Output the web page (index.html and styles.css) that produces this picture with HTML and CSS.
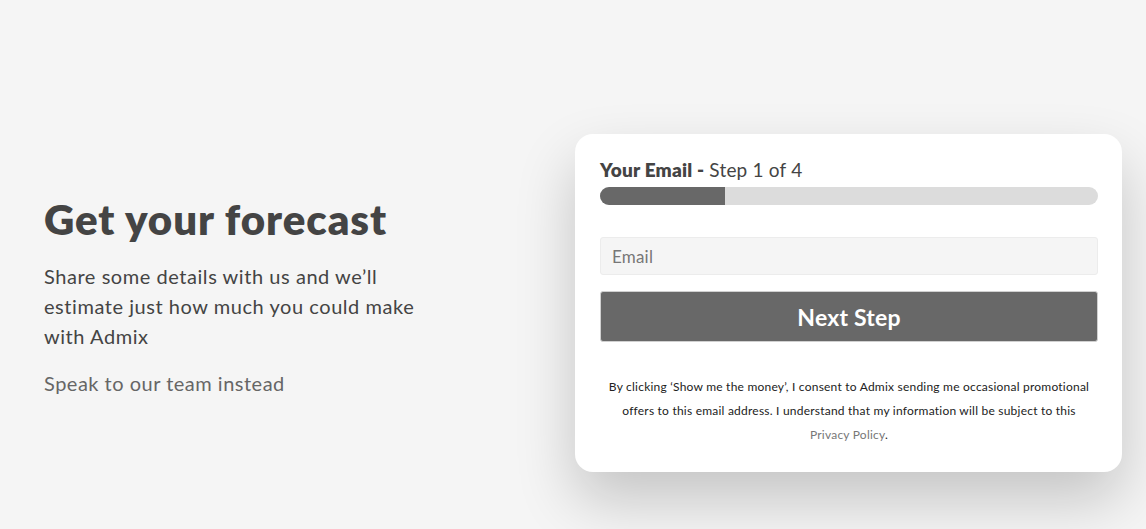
FILE: index.html
```html
<!DOCTYPE html>
<html lang="en">
<head>
<meta charset="utf-8">
<title>Get your forecast</title>
<link rel="stylesheet" href="styles.css">
</head>
<body>
<main class="page">
  <section class="intro">
    <h1 class="intro-title">Get your forecast</h1>
    <p class="intro-text">Share some details with us and we’ll estimate just how much you could make with Admix</p>
    <a class="intro-link" href="#">Speak to our team instead</a>
  </section>
  <section class="card">
    <div class="step-title"><strong>Your Email -</strong> Step 1 of 4</div>
    <div class="progress"><div class="progress-fill" style="width:25%"></div></div>
    <input class="field" type="email" placeholder="Email">
    <button class="next-btn" type="button">Next Step</button>
    <p class="legal">By clicking ‘Show me the money’, I consent to Admix sending me occasional promotional offers to this email address. I understand that my information will be subject to this <span class="nowrap"><a href="#" class="legal-link">Privacy Policy</a>.</span></p>
  </section>
</main>
</body>
</html>
```

FILE: styles.css
```css
* { box-sizing: border-box; }
html, body { margin: 0; padding: 0; }
body {
  background: #f5f5f5;
  font-family: "Lato", "Noto Sans", sans-serif;
  color: #444;
  width: 1146px;
  height: 529px;
  overflow: hidden;
}
.page {
  display: flex;
  justify-content: space-between;
  align-items: center;
  padding: 134px 24px 0 44px;
}
.intro {
  width: 390px;
  margin-top: -13px;
}
.intro-title {
  margin: 0;
  font-size: 42px;
  line-height: 48px;
  font-weight: 800;
  letter-spacing: 0.95px;
  color: #444;
}
.intro-text {
  margin: 18px 0 0;
  font-size: 20px;
  line-height: 30px;
  letter-spacing: 0.55px;
  color: #444;
}
.intro-link {
  display: block;
  margin-top: 17px;
  font-size: 20px;
  line-height: 30px;
  letter-spacing: 0.5px;
  color: #666;
  text-decoration: none;
}
.card {
  width: 547px;
  background: #fff;
  border-radius: 18px;
  padding: 25px 24px 25px 25px;
  box-shadow: 0 28px 60px rgba(0,0,0,0.2);
  display: flex;
  flex-direction: column;
}
.step-title {
  font-size: 19px;
  line-height: 22px;
  letter-spacing: 0.2px;
  color: #444;
}
.step-title strong { font-weight: 800; }
.progress {
  margin-top: 6px;
  height: 18px;
  border-radius: 9px;
  background: #dcdcdc;
  overflow: hidden;
}
.progress-fill {
  height: 100%;
  background: #686868;
}
.field {
  margin-top: 32px;
  height: 38px;
  border: 1px solid #ececec;
  border-radius: 3px;
  background: #f5f5f5;
  padding: 0 11px;
  font-family: inherit;
  font-size: 17px;
  letter-spacing: 0.2px;
  color: #444;
}
.field::placeholder { color: #777; }
.next-btn {
  margin-top: 16px;
  height: 51px;
  border: 1px solid #d0d0d0;
  border-radius: 3px;
  background: #686868;
  color: #fff;
  font-family: inherit;
  font-size: 23px;
  font-weight: 700;
  letter-spacing: 0.2px;
}
.legal {
  margin: 33px 0 0;
  font-size: 12px;
  line-height: 24px;
  letter-spacing: 0.22px;
  text-align: center;
  color: #222;
}
.nowrap { white-space: nowrap; }
.legal-link {
  color: #777;
  text-decoration: none;
}
```
